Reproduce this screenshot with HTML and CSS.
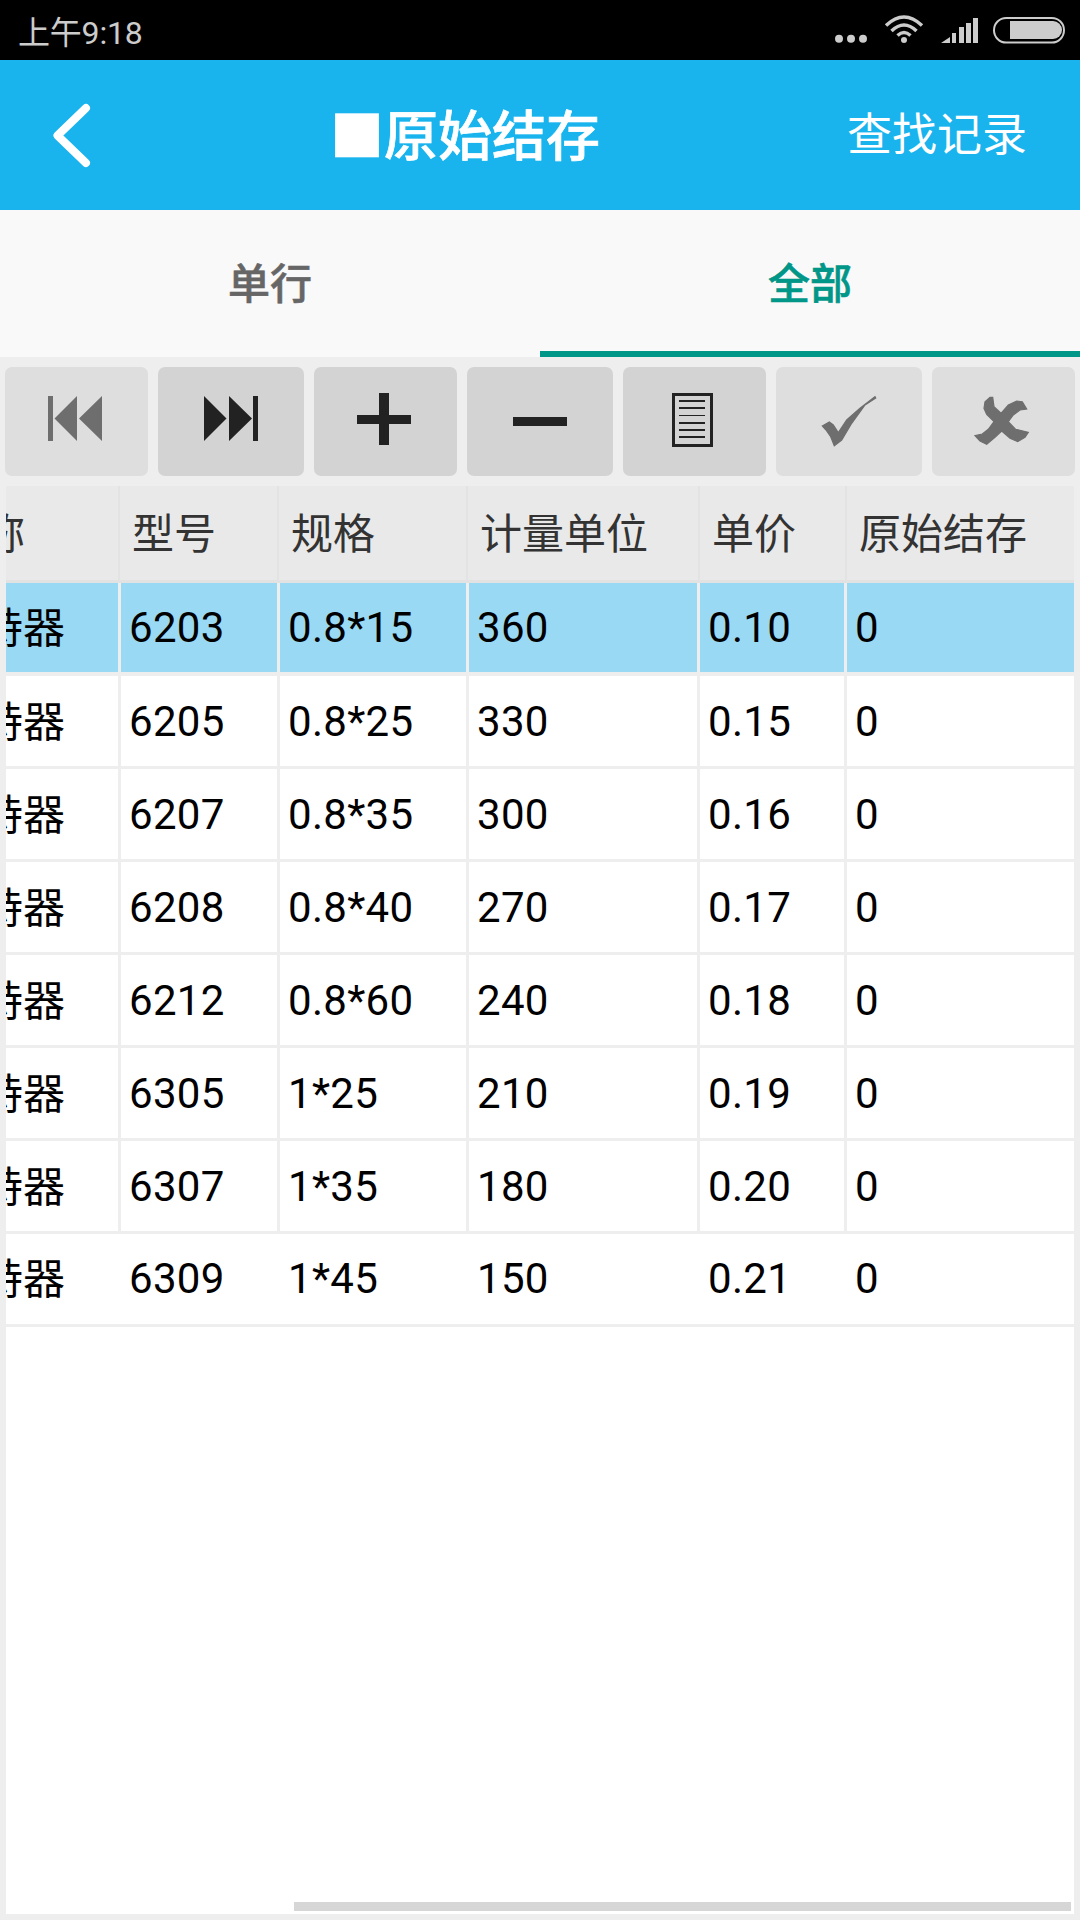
FILE: index.html
```html
<!DOCTYPE html>
<html>
<head>
    <title>原始结存</title>
    <link rel="stylesheet" href="styles.css">
</head>
<body>
<div class="page">
    <div class="status-bar">
        <span class="status-time">上午9:18</span>
        <svg class="status-icons" width="250" height="60" viewBox="830 0 250 60">
            <circle cx="839" cy="38.7" r="4" fill="#ccc"/>
            <circle cx="851" cy="38.7" r="4" fill="#ccc"/>
            <circle cx="863" cy="38.7" r="4" fill="#ccc"/>
            <g fill="none" stroke="#ccc" stroke-width="3.5">
                <path d="M886 25.5 Q904 8.5 922 25.5"/>
                <path d="M891.5 31 Q904 19 916.5 31"/>
                <path d="M897.5 35.5 Q904 29.5 910.5 35.5"/>
            </g>
            <circle cx="904" cy="40" r="3" fill="#ccc"/>
            <path d="M941 43 L950 37 V43 Z M952 33 H956 V43 H952 Z M959 27 H964 V43 H959 Z M966 23 H971 V43 H966 Z M973 18 H978 V43 H973 Z" fill="#ccc"/>
            <rect x="994" y="18" width="70" height="24.5" rx="12.2" fill="none" stroke="#ccc" stroke-width="2"/>
            <path d="M1010 21 H1053 A9 9 0 0 1 1053 39 H1010 Z" fill="#ccc"/>
        </svg>
    </div>

    <div class="header">
        <div class="back">
            <svg width="100" height="150" viewBox="0 60 100 150">
                <polyline points="86,108 57.5,135.5 86,163" fill="none" stroke="#fff" stroke-width="8" stroke-linecap="round" stroke-linejoin="round"/>
            </svg>
        </div>
        <div class="title">■原始结存</div>
        <div class="action">查找记录</div>
    </div>

    <div class="tabs">
        <div class="tab">单行</div>
        <div class="tab tab-active">全部</div>
    </div>

    <div class="toolbar">
        <div class="tool-btn disabled">
            <svg width="143" height="109" viewBox="5 367 143 109">
                <path d="M48 396 H53 V441 H48 Z M77 396 V441 L54.5 418.5 Z M102 396 V441 L79 418.5 Z" fill="#6e6e6e"/>
            </svg>
        </div>
        <div class="tool-btn wide">
            <svg width="146" height="109" viewBox="158 367 146 109">
                <path d="M204 396 L226.5 418.5 L204 441 Z M229 396 L252 418.5 L229 441 Z M253 396 H258 V441 H253 Z" fill="#222"/>
            </svg>
        </div>
        <div class="tool-btn">
            <svg width="143" height="109" viewBox="314 367 143 109">
                <path d="M379 393 H389 V415 H411 V424 H389 V445 H379 V424 H357 V415 H379 Z" fill="#222"/>
            </svg>
        </div>
        <div class="tool-btn wide">
            <svg width="146" height="109" viewBox="467 367 146 109">
                <rect x="513" y="417" width="54" height="9" fill="#222"/>
            </svg>
        </div>
        <div class="tool-btn">
            <svg width="143" height="109" viewBox="623 367 143 109">
                <rect x="673.5" y="394.5" width="38" height="51" fill="none" stroke="#222" stroke-width="3"/>
                <path d="M679 400 H705 V402 H679 Z M679 407 H705 V409 H679 Z M679 415 H705 V416 H679 Z M679 422 H705 V424 H679 Z M679 429 H705 V431 H679 Z M679 436 H705 V438 H679 Z" fill="#222"/>
            </svg>
        </div>
        <div class="tool-btn wide disabled">
            <svg width="146" height="109" viewBox="776 367 146 109">
                <path d="M822.3 426 L829.3 422 L833.3 425 L838.3 432.7 L846.7 420 L860 408.3 L875 396.7 L875.7 398 L865 405 L851.7 423.3 L841.7 440 L834.3 445.7 L830.7 436.7 L826 430 Z" fill="#6e6e6e" stroke="#6e6e6e" stroke-width="1.2"/>
            </svg>
        </div>
        <div class="tool-btn disabled">
            <svg width="143" height="109" viewBox="932 367 143 109">
                <path d="M990 397.3 L992.7 397.3 L994 406.7 L1001 413.3 L1008.3 405 L1016.7 401 L1022.3 401.7 L1026.7 409 L1020 410 L1013.3 415 L1008.3 421.7 L1015.7 429.3 L1028.3 432.3 L1025 437.3 L1017.7 441.7 L1010 438.3 L1001.7 431 L995 437.3 L986.7 444.3 L980 441 L975 435.7 L982.3 434 L988.3 429.3 L994 421.7 L986.7 414.3 L984 408.3 L985 401.7 Z" fill="#6e6e6e" stroke="#6e6e6e" stroke-width="1.2"/>
            </svg>
        </div>
    </div>

    <div class="table">
        <div class="table-head">
            <div class="th first">名称</div>
            <div class="th">型号</div>
            <div class="th">规格</div>
            <div class="th">计量单位</div>
            <div class="th">单价</div>
            <div class="th">原始结存</div>
        </div>

        <div class="row selected">
            <div class="td first">保持器</div>
            <div class="td">6203</div>
            <div class="td">0.8*15</div>
            <div class="td">360</div>
            <div class="td">0.10</div>
            <div class="td">0</div>
        </div>
        <div class="row">
            <div class="td first">保持器</div>
            <div class="td">6205</div>
            <div class="td">0.8*25</div>
            <div class="td">330</div>
            <div class="td">0.15</div>
            <div class="td">0</div>
        </div>
        <div class="row">
            <div class="td first">保持器</div>
            <div class="td">6207</div>
            <div class="td">0.8*35</div>
            <div class="td">300</div>
            <div class="td">0.16</div>
            <div class="td">0</div>
        </div>
        <div class="row">
            <div class="td first">保持器</div>
            <div class="td">6208</div>
            <div class="td">0.8*40</div>
            <div class="td">270</div>
            <div class="td">0.17</div>
            <div class="td">0</div>
        </div>
        <div class="row">
            <div class="td first">保持器</div>
            <div class="td">6212</div>
            <div class="td">0.8*60</div>
            <div class="td">240</div>
            <div class="td">0.18</div>
            <div class="td">0</div>
        </div>
        <div class="row">
            <div class="td first">保持器</div>
            <div class="td">6305</div>
            <div class="td">1*25</div>
            <div class="td">210</div>
            <div class="td">0.19</div>
            <div class="td">0</div>
        </div>
        <div class="row">
            <div class="td first">保持器</div>
            <div class="td">6307</div>
            <div class="td">1*35</div>
            <div class="td">180</div>
            <div class="td">0.20</div>
            <div class="td">0</div>
        </div>
        <div class="row row-last">
            <div class="td first">保持器</div>
            <div class="td">6309</div>
            <div class="td">1*45</div>
            <div class="td">150</div>
            <div class="td">0.21</div>
            <div class="td">0</div>
        </div>

        <div class="scrollbar"></div>
    </div>
</div>
</body>
</html>
```

FILE: styles.css
```css
body {
    margin: 0;
    background-color: #eeeeee;
    font-family: Roboto, "Noto Sans CJK SC", sans-serif;
}
.page {
    width: 1080px;
    height: 1920px;
    display: flex;
    flex-direction: column;
    overflow: hidden;
}
.status-bar {
    height: 60px;
    flex: none;
    background-color: #000;
    color: #ccc;
    display: flex;
    align-items: center;
    justify-content: space-between;
    padding-left: 18px;
}
.status-time {
    font-size: 32px;
    letter-spacing: -0.2px;
}
.status-icons {
    display: block;
}
.header {
    height: 150px;
    flex: none;
    background-color: #19b3ee;
    color: #fff;
    display: flex;
    align-items: center;
}
.back {
    width: 330px;
    height: 150px;
}
.back svg {
    display: block;
}
.title {
    flex: 1;
    font-size: 54px;
    font-weight: 500;
    -webkit-text-stroke: 0.7px #fff;
    padding-bottom: 5px;
}
.action {
    font-size: 45px;
    padding-right: 53px;
    padding-bottom: 7px;
}
.tabs {
    height: 147px;
    flex: none;
    display: flex;
    background-color: #f9f9f9;
}
.tab {
    flex: 1;
    display: flex;
    align-items: center;
    justify-content: center;
    font-size: 42px;
    font-weight: 500;
    -webkit-text-stroke: 0.6px;
    color: #666;
    box-sizing: border-box;
    border-bottom: 6px solid transparent;
    padding-bottom: 1px;
}
.tab-active {
    color: #009688;
    border-bottom-color: #009688;
}
.toolbar {
    flex: none;
    display: flex;
    gap: 10px;
    padding: 10px 5px;
}
.tool-btn {
    width: 143px;
    height: 109px;
    border-radius: 7px;
    background-color: #d3d3d3;
}
.tool-btn.wide {
    width: 146px;
}
.tool-btn.disabled {
    background-color: #dedede;
}
.tool-btn svg {
    display: block;
}
.table {
    position: relative;
    flex: 1;
    margin: 0 6px 6px;
    background-color: #fff;
}
.table-head {
    height: 94px;
    display: grid;
    grid-template-columns: 112px 157px 187px 230px 145px 1fr;
    column-gap: 2px;
    background-color: #e3e3e3;
    border-bottom: 3px solid #e2e2e2;
}
.th {
    display: flex;
    align-items: center;
    padding-left: 12px;
    padding-bottom: 5px;
    overflow: hidden;
    white-space: nowrap;
    font-size: 42px;
    color: #333;
    background-color: #e9e9e9;
}
.row {
    height: 90px;
    display: grid;
    grid-template-columns: 112px 156px 186px 228px 144px 1fr;
    column-gap: 3px;
    background-color: #eeeeee;
    border-bottom: 3px solid #eeeeee;
}
.td {
    display: flex;
    align-items: center;
    padding-left: 8px;
    overflow: hidden;
    white-space: nowrap;
    font-size: 42px;
    letter-spacing: 0.3px;
    color: #000;
    background-color: #fff;
}
.th.first,
.td.first {
    justify-content: flex-end;
    padding-left: 0;
}
.th.first {
    padding-right: 93px;
}
.td.first {
    padding-right: 53px;
    padding-bottom: 6px;
    letter-spacing: 0;
}
.row.selected {
    height: 89px;
    border-bottom-width: 4px;
}
.row.selected .td {
    background-color: #99d9f4;
}
.row-last {
    height: 88px;
    padding-bottom: 2px;
    background-color: #fff;
}
.scrollbar {
    position: absolute;
    left: 288px;
    right: 3px;
    bottom: 3px;
    height: 9px;
    background-color: #d6d6d6;
}
```
